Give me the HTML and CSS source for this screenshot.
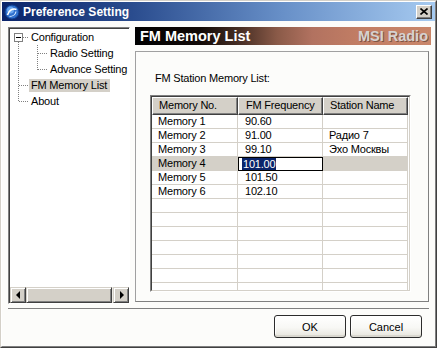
FILE: index.html
```html
<!DOCTYPE html>
<html lang="en">
<head>
  <meta charset="UTF-8">
  <title>Preference Setting</title>
  <link rel="stylesheet" href="styles.css">
</head>
<body>
  <div class="window">
    <div class="frame">
      <div class="titlebar">
        <svg class="app-icon" width="16" height="16" viewBox="0 0 16 16">
          <circle cx="8" cy="8" r="7" fill="#2f6fcc" stroke="#0c3c8c"/>
          <circle cx="6.5" cy="6" r="3.5" fill="#6aa6ee"/>
          <path d="M3.5 11 C5 6 9 4 12.5 5.5" stroke="#fff" stroke-width="1.6" fill="none"/>
          <path d="M5.5 12.5 C8.5 12.5 11.5 10.5 12 7.5" stroke="#d8ecff" stroke-width="1.2" fill="none"/>
        </svg>
        <span class="title">Preference Setting</span>
        <button class="close-btn">
          <svg width="8" height="7" viewBox="0 0 8 7">
            <path d="M0.5 0.5 L7.5 6.5 M7.5 0.5 L0.5 6.5" stroke="#000" stroke-width="1.6"/>
          </svg>
        </button>
      </div>

      <div class="client">
        <div class="main">
          <div class="tree-panel">
            <div class="tree">
              <svg class="tree-lines" width="60" height="80" viewBox="0 0 60 80">
                <g stroke="#808080" stroke-dasharray="1 1" shape-rendering="crispEdges">
                  <line x1="8.5" y1="13" x2="8.5" y2="73"/>
                  <line x1="13" y1="8.5" x2="18" y2="8.5"/>
                  <line x1="9" y1="56.5" x2="18" y2="56.5"/>
                  <line x1="9" y1="72.5" x2="18" y2="72.5"/>
                  <line x1="27.5" y1="16" x2="27.5" y2="41"/>
                  <line x1="28" y1="24.5" x2="37" y2="24.5"/>
                  <line x1="28" y1="40.5" x2="37" y2="40.5"/>
                </g>
                <rect x="4.5" y="4.5" width="8" height="8" fill="#fff" stroke="#808080" shape-rendering="crispEdges"/>
                <rect x="6" y="8" width="5" height="1" fill="#000"/>
              </svg>
              <div class="tree-row"><span class="tree-label">Configuration</span></div>
              <div class="tree-row child"><span class="tree-label">Radio Setting</span></div>
              <div class="tree-row child"><span class="tree-label">Advance Setting</span></div>
              <div class="tree-row"><span class="tree-label selected">FM Memory List</span></div>
              <div class="tree-row"><span class="tree-label">About</span></div>
            </div>
            <div class="hscroll">
              <div class="sb-btn"><span class="arrow-left"></span></div>
              <div class="sb-thumb"></div>
              <div class="sb-btn"><span class="arrow-right"></span></div>
            </div>
          </div>

          <div class="page">
            <div class="page-header">
              <span class="page-title">FM Memory List</span>
              <span class="brand">MSI Radio</span>
            </div>
            <div class="page-box">
              <p class="caption">FM Station Memory List:</p>
              <div class="list">
                <div class="list-inner">
                  <div class="list-head">
                    <div class="head-cell">Memory No.</div>
                    <div class="head-cell">FM Frequency</div>
                    <div class="head-cell">Station Name</div>
                  </div>
                  <div class="list-row"><div class="cell">Memory 1</div><div class="cell">90.60</div><div class="cell"></div></div>
                  <div class="list-row"><div class="cell">Memory 2</div><div class="cell">91.00</div><div class="cell">Радио 7</div></div>
                  <div class="list-row"><div class="cell">Memory 3</div><div class="cell">99.10</div><div class="cell">Эхо Москвы</div></div>
                  <div class="list-row current"><div class="cell">Memory 4</div><div class="cell edit"><span class="sel-text">101.00</span></div><div class="cell"></div></div>
                  <div class="list-row"><div class="cell">Memory 5</div><div class="cell">101.50</div><div class="cell"></div></div>
                  <div class="list-row"><div class="cell">Memory 6</div><div class="cell">102.10</div><div class="cell"></div></div>
                  <div class="list-row"><div class="cell"></div><div class="cell"></div><div class="cell"></div></div>
                  <div class="list-row"><div class="cell"></div><div class="cell"></div><div class="cell"></div></div>
                  <div class="list-row"><div class="cell"></div><div class="cell"></div><div class="cell"></div></div>
                  <div class="list-row"><div class="cell"></div><div class="cell"></div><div class="cell"></div></div>
                  <div class="list-row"><div class="cell"></div><div class="cell"></div><div class="cell"></div></div>
                  <div class="list-row"><div class="cell"></div><div class="cell"></div><div class="cell"></div></div>
                  <div class="list-row"><div class="cell"></div><div class="cell"></div><div class="cell"></div></div>
                </div>
              </div>
            </div>
          </div>
        </div>

        <div class="footer">
          <button class="btn">OK</button>
          <button class="btn">Cancel</button>
        </div>
      </div>
    </div>
  </div>
</body>
</html>
```

FILE: styles.css
```css
* {
  margin: 0;
  padding: 0;
  box-sizing: border-box;
}

body {
  width: 437px;
  height: 348px;
  overflow: hidden;
  background-color: #d4d0c8;
  font-family: "Liberation Sans", Arial, sans-serif;
  font-size: 11px;
  color: #000;
}

.window {
  width: 437px;
  height: 348px;
  display: flex;
  border: 1px solid;
  border-color: #d4d0c8 #404040 #404040 #d4d0c8;
}

.frame {
  flex: 1;
  display: flex;
  flex-direction: column;
  border: 1px solid;
  border-color: #fff #808080 #808080 #fff;
  background-color: #fcfcfa;
}

/* title bar */
.titlebar {
  height: 19px;
  display: flex;
  align-items: center;
  padding-left: 2px;
  background: linear-gradient(90deg, #0a246a 0%, #2a4c8e 30%, #6890c8 65%, #a6caf0 100%);
}

.app-icon {
  flex-shrink: 0;
}

.title {
  margin-left: 3px;
  color: #fff;
  font-size: 12px;
  font-weight: bold;
  flex: 1;
}

.close-btn {
  width: 16px;
  height: 14px;
  margin-right: 3px;
  display: flex;
  align-items: center;
  justify-content: center;
  background-color: #d4d0c8;
  border: 1px solid;
  border-color: #fff #404040 #404040 #fff;
  box-shadow: inset -1px -1px 0 #808080;
}

/* client area */
.client {
  flex: 1;
  display: flex;
  flex-direction: column;
  padding: 6px 4px 0 6px;
}

.main {
  height: 277px;
  display: flex;
  gap: 5px;
}

.tree-panel {
  width: 122px;
  display: flex;
  flex-direction: column;
  border: 1px solid;
  border-color: #808080 #fff #fff #808080;
  background-color: #fff;
}

.tree {
  flex: 1;
  position: relative;
  border: 1px solid;
  border-color: #404040 #d4d0c8 #d4d0c8 #404040;
  border-bottom: none;
  border-right: none;
  letter-spacing: -0.2px;
}

.tree-lines {
  position: absolute;
  left: 0;
  top: 0;
}

.tree-row {
  height: 16px;
  display: flex;
  align-items: center;
  padding-left: 19px;
  position: relative;
  white-space: nowrap;
}

.tree-row.child {
  padding-left: 38px;
}

.tree-label {
  padding: 0 2px;
  line-height: 13px;
}

.tree-label.selected {
  background-color: #d4d0c8;
  padding-right: 3px;
}

.hscroll {
  height: 16px;
  display: flex;
  border-left: 1px solid #404040;
  background-color: #ebe9e4;
}

.sb-btn,
.sb-thumb {
  background-color: #d4d0c8;
  border: 1px solid;
  border-color: #d4d0c8 #404040 #404040 #d4d0c8;
  box-shadow: inset 1px 1px 0 #fff, inset -1px -1px 0 #808080;
}

.sb-btn {
  width: 16px;
  display: flex;
  align-items: center;
  justify-content: center;
}

.sb-thumb {
  width: 86px;
  margin-right: 1px;
}

.arrow-left,
.arrow-right {
  width: 0;
  height: 0;
  border-top: 4px solid transparent;
  border-bottom: 4px solid transparent;
}

.arrow-left {
  border-right: 4px solid #000;
  margin-left: -1px;
}

.arrow-right {
  border-left: 4px solid #000;
  margin-left: 1px;
}

/* right page */
.page {
  flex: 1;
  display: flex;
  flex-direction: column;
}

.page-header {
  height: 18px;
  display: flex;
  justify-content: space-between;
  align-items: center;
  padding: 0 3px 0 5px;
  background: linear-gradient(90deg, #000 0%, #120a07 22%, #4a3026 36%, #8a5a48 48%, #b27260 60%, #c17d64 75%, #c98669 100%);
  font-size: 14.5px;
  font-weight: bold;
}

.page-title {
  color: #fff;
}

.brand {
  color: #d6d2d0;
  text-shadow: 1px 1px 0 #7e5444;
}

.page-box {
  flex: 1;
  margin: 6px 2px 2px 0;
  border: 1px solid;
  border-color: #a0a0a0 #808080 #808080 #a0a0a0;
  padding: 20px 0 0 14px;
}

.caption {
  line-height: 13px;
  margin-left: 5px;
  margin-bottom: 10px;
  letter-spacing: -0.2px;
}

.list {
  width: 261px;
  height: 197px;
  border: 1px solid;
  border-color: #808080 #fff #fff #808080;
  letter-spacing: -0.2px;
}

.list-inner {
  height: 100%;
  overflow: hidden;
  border: 1px solid;
  border-color: #404040 #d4d0c8 #d4d0c8 #404040;
  background-color: #fff;
}

.list-head,
.list-row {
  display: grid;
  grid-template-columns: 86px 85px 85px;
}

.head-cell {
  height: 18px;
  line-height: 15px;
  padding-left: 6px;
  background-color: #d4d0c8;
  border: 1px solid;
  border-color: #fff #404040 #404040 #fff;
  box-shadow: inset -1px -1px 0 #808080;
  white-space: nowrap;
  overflow: hidden;
}

.list-row {
  height: 14px;
}

.cell {
  height: 14px;
  line-height: 13px;
  padding-left: 6px;
  border-right: 1px solid #d4d0c8;
  border-bottom: 1px solid #d4d0c8;
  white-space: nowrap;
  overflow: hidden;
}

.list-row .cell:nth-child(2),
.list-head .head-cell:nth-child(2) {
  padding-left: 7px;
}

.list-row.current .cell {
  background-color: #d4d0c8;
}

.list-row.current .cell.edit {
  background-color: #fff;
  border: 1px solid #000;
  padding-left: 3px;
  line-height: 12px;
}

.sel-text {
  background-color: #0a246a;
  color: #fff;
  padding: 0 1px;
}

/* footer */
.footer {
  margin-top: 4px;
  margin-right: 2px;
  border-top: 1px solid #808080;
  display: flex;
  justify-content: flex-end;
  gap: 4px;
  padding: 6px 7px 0 0;
}

.btn {
  width: 72px;
  height: 23px;
  font-family: "Liberation Sans", Arial, sans-serif;
  font-size: 11px;
  color: #000;
  border: 1px solid #2c2c2c;
  border-radius: 3px;
  background: linear-gradient(#fff 0%, #f8f8f5 55%, #e6e4dc 100%);
  box-shadow: inset 0 -2px 0 #d9d7cf, inset 1px 1px 0 #fff;
}
```
